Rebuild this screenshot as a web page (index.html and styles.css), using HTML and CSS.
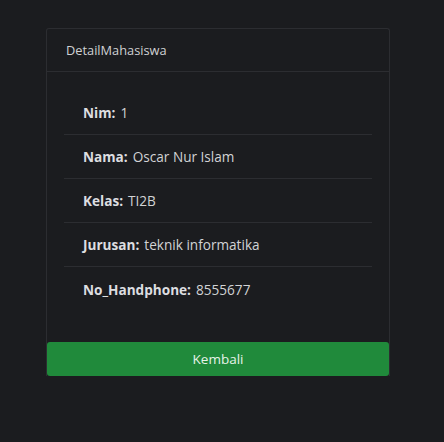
FILE: index.html
```html
<!DOCTYPE html>
<html>
<head>
<meta charset="utf-8">
<link rel="stylesheet" href="styles.css">
</head>
<body>
<div class="card">
  <div class="card-header">DetailMahasiswa</div>
  <div class="card-body">
    <ul class="list">
      <li class="item"><b>Nim:</b> 1</li>
      <li class="item"><b>Nama:</b> Oscar Nur Islam</li>
      <li class="item"><b>Kelas:</b> TI2B</li>
      <li class="item"><b>Jurusan:</b> teknik informatika</li>
      <li class="item"><b>No_Handphone:</b> 8555677</li>
    </ul>
  </div>
  <a class="btn" href="#">Kembali</a>
</div>
</body>
</html>
```
FILE: styles.css
```css
html, body {
  margin: 0;
  padding: 0;
  background: #1b1c1f;
}
body {
  padding: 28px 0 0 46px;
  font-family: "Open Sans", "Noto Sans", sans-serif;
  font-size: 13px;
  color: #d2d3d5;
}
.card {
  width: 342px;
  border: 1px solid #2c2d31;
  border-bottom: none;
  border-radius: 3px 3px 0 0;
  background: #1b1c1f;
  display: flex;
  flex-direction: column;
}
.card-header {
  height: 43px;
  box-sizing: border-box;
  border-bottom: 1px solid #2c2d31;
  padding: 0 19px;
  display: flex;
  align-items: center;
  font-size: 12.8px;
  color: #d0d1d3;
}
.card-body {
  padding: 19px 17px 31px 17px;
}
.list {
  list-style: none;
  margin: 0;
  padding: 0;
}
.item {
  height: 44px;
  box-sizing: border-box;
  padding: 0 19px;
  display: flex;
  align-items: center;
  gap: 5px;
  border-bottom: 1px solid #2c2d31;
  font-size: 13.6px;
  color: #d2d3d5;
}
.item:last-child {
  border-bottom: none;
}
.item b {
  font-weight: 700;
  font-size: 13.6px;
  color: #dddee0;
}
.btn {
  display: flex;
  align-items: center;
  justify-content: center;
  height: 34px;
  background: #208a3b;
  border-radius: 3px;
  color: #e6f2e8;
  text-decoration: none;
  font-size: 13.5px;
}
```
